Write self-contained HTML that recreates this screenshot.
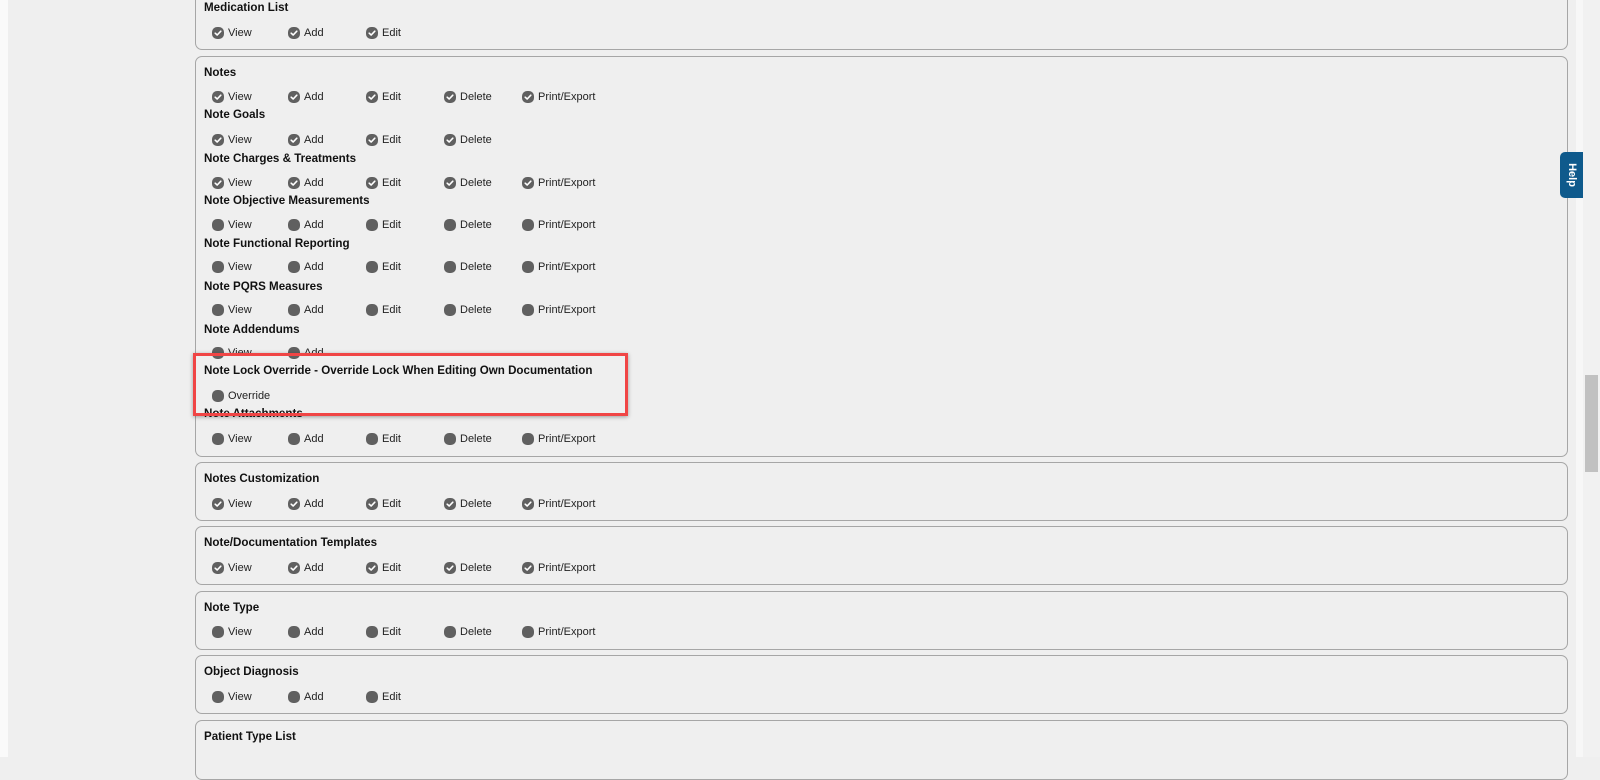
<!DOCTYPE html>
<html style="background:#efefef"><head><meta charset="utf-8"><style>
*{margin:0;padding:0;box-sizing:border-box}
body{width:1600px;height:757px;overflow:hidden;background:#efefef;font-family:"Liberation Sans",Arial,sans-serif;color:#111;position:relative}
.ws{position:absolute;left:0;top:0;width:8px;height:757px;background:#fafafa}
.p{position:absolute;left:195px;width:1373px;border:1px solid #a6a6a6;border-radius:7px;background:#efefef}
.t{position:absolute;left:204px;font-size:11.6px;font-weight:bold;line-height:14px;white-space:nowrap}
.r{position:absolute;left:0;height:14px;font-size:11px;line-height:14px}
.c{position:absolute;width:12px;height:12px;border-radius:5px;background:#606060;top:1px}
.c svg{position:absolute;left:0;top:0}
.l{position:absolute;top:0;white-space:nowrap;color:#222}
.help{position:absolute;left:1560px;top:152px;width:23px;height:46px;background:#0f5a8c;border-radius:5px 0 0 5px;color:#fff}
.help span{position:absolute;left:50%;top:50%;transform:translate(-50%,-50%) rotate(90deg);font-size:11px;font-weight:bold}
.sb{position:absolute;left:1583px;top:0;width:17px;height:757px;background:#f1f1f1}
.ws2{position:absolute;left:1576px;top:0;width:7px;height:757px;background:#f7f7f7}
.th{position:absolute;left:1585px;top:375px;width:13px;height:97px;background:#c1c1c1}
.red{position:absolute;left:193px;top:353px;width:435px;height:63px;border:3px solid #f04545;box-shadow:0 1px 4px rgba(0,0,0,.35)}
</style></head><body>
<div class="ws"></div>
<div class="p" style="top:-10px;height:60px"></div>
<div class="p" style="top:56px;height:401px"></div>
<div class="p" style="top:462px;height:59px"></div>
<div class="p" style="top:526px;height:59px"></div>
<div class="p" style="top:591px;height:59px"></div>
<div class="p" style="top:655px;height:59px"></div>
<div class="p" style="top:720px;height:60px"></div>

<div id="content"></div>
<div class="red"></div>
<div class="ws2"></div>
<div class="sb"></div>
<div class="th"></div>
<div class="help"><span>Help</span></div>
<script>
var ck='<svg width="12" height="12" viewBox="0 0 12 12"><path d="M3.2 6.2 L5.2 8 L8.8 4.2" stroke="#fff" stroke-width="1.6" fill="none" stroke-linecap="round" stroke-linejoin="round"/></svg>';
var xs=[212,288,366,444,522];
var all=["View","Add","Edit","Delete","Print/Export"];
var d=[
["Medication List",1,33,3,1],
["Notes",66,97,5,1],
["Note Goals",108,140,4,1],
["Note Charges &amp; Treatments",152,183,5,1],
["Note Objective Measurements",194,225,5,0],
["Note Functional Reporting",237,267,5,0],
["Note PQRS Measures",280,310,5,0],
["Note Addendums",323,353,2,0],
["Note Lock Override - Override Lock When Editing Own Documentation",364,396,-1,0],
["Note Attachments",407,439,5,0],
["Notes Customization",472,504,5,1],
["Note/Documentation Templates",536,568,5,1],
["Note Type",601,632,5,0],
["Object Diagnosis",665,697,3,0],
["Patient Type List",730,0,0,0]
];
var h='';
d.forEach(function(r){
 h+='<div class="t" style="top:'+r[1]+'px">'+r[0]+'</div>';
 if(r[3]==0)return;
 var labs=r[3]<0?["Override"]:all.slice(0,r[3]);
 labs.forEach(function(l,i){
  h+='<div class="r" style="top:'+(r[2]-7)+'px"><div class="c" style="left:'+xs[i]+'px">'+(r[4]?ck:'')+'</div><div class="l" style="left:'+(xs[i]+16)+'px">'+l+'</div></div>';
 });
});
document.getElementById('content').innerHTML=h;
</script>
</body></html>
